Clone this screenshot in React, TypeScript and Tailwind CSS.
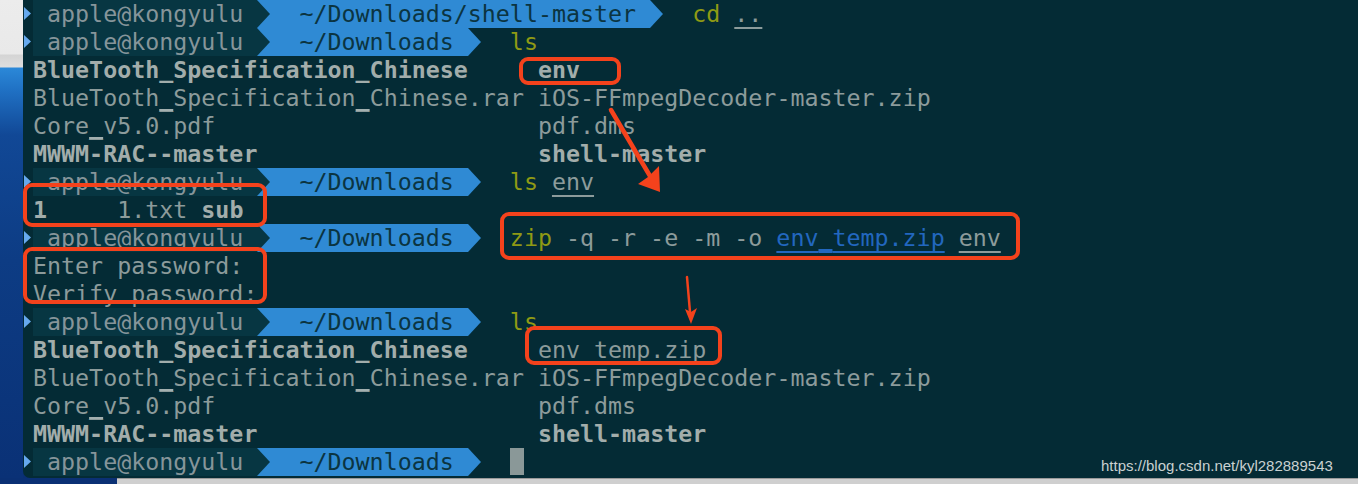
import type { ReactNode } from 'react';

type Seg = { t: string; b?: boolean; u?: boolean; cmd?: boolean; link?: boolean };

const mono = "font-['DejaVu_Sans_Mono','Liberation_Mono',monospace]";

function withUnderscores(t: string, bold?: boolean, link?: boolean): ReactNode {
  if (bold || !t.includes('_')) return t;
  const deco = link ? '' : ' decoration-[#a3b0b0]';
  return t.split(/(_)/).map((p, i) =>
    p === '_' ? (
      <span key={i} className={'underline decoration-2 underline-offset-[3px]' + deco}>
        _
      </span>
    ) : (
      p
    ),
  );
}

function Span({ s }: { s: Seg }) {
  let cls = 'text-[#8c9b9b]';
  if (s.b) cls = 'font-bold text-[#a2adab]';
  if (s.cmd) cls = 'text-[#8f9a14]';
  if (s.link) cls = 'text-[#2267bf]';
  const u = s.u ? ' underline underline-offset-[5px] decoration-[1.5px]' : '';
  return <span className={cls + u}>{withUnderscores(s.t, s.b, s.link)}</span>;
}

function TextLine({ segs }: { segs: Seg[] }) {
  return (
    <div className="h-[28px] whitespace-pre pl-[10px] leading-[28px]">
      {segs.map((s, i) => (
        <Span key={i} s={s} />
      ))}
    </div>
  );
}

function Prompt({ dir, segs, cursor }: { dir: string; segs: Seg[]; cursor?: boolean }) {
  return (
    <div className="flex h-[28px] items-center whitespace-pre leading-[28px]">
      {/* gutter marker */}
      <svg width="10" height="28" className="shrink-0">
        <polygon points="1,7 8,13.5 1,20" fill="#66a9ee" />
      </svg>
      <div className="flex h-full items-center bg-[#073642] text-[#86959a]">{' apple@kongyulu '}</div>
      <svg width="14" height="28" className="shrink-0">
        <rect width="14" height="28" fill="#2f8ad4" />
        <polygon points="0,0 13,14 0,28" fill="#073642" />
      </svg>
      <div className="flex h-full items-center bg-[#2f8ad4] text-[#0b3441]">{'  ' + dir + ' '}</div>
      <svg width="14" height="28" className="shrink-0">
        <polygon points="0,0 13,14 0,28" fill="#2f8ad4" />
      </svg>
      <div className="h-full">
        {'  '}
        {segs.map((s, i) => (
          <Span key={i} s={s} />
        ))}
      </div>
      {cursor && <span className="mb-[1px] inline-block h-[27px] w-[14px] bg-[#8a9898]" />}
    </div>
  );
}

function Box({ x, y, w, h }: { x: number; y: number; w: number; h: number }) {
  return (
    <div
      className="pointer-events-none absolute rounded-[9px] border-[4px] border-[#f4421c]"
      style={{ left: x, top: y, width: w, height: h }}
    />
  );
}

export default function App() {
  const pad = (s: string) => s.padEnd(36, ' ');
  const listing = (second: Seg): ReactNode => (
    <>
      <TextLine segs={[{ t: 'BlueTooth_Specification_Chinese', b: true }, { t: '     ' }, second]} />
      <TextLine segs={[{ t: 'BlueTooth_Specification_Chinese.rar iOS-FFmpegDecoder-master.zip' }]} />
      <TextLine segs={[{ t: pad('Core_v5.0.pdf') }, { t: 'pdf.dms' }]} />
      <TextLine segs={[{ t: 'MWWM-RAC--master', b: true }, { t: pad('').slice(16) }, { t: 'shell-master', b: true }]} />
    </>
  );

  return (
    <div className="relative flex h-[484px] w-[1358px] flex-col overflow-hidden bg-[#0a2f72]">
      <div className="flex h-[478px]">
        {/* desktop strip on the left */}
        <div className="w-[23px] shrink-0 bg-[linear-gradient(to_bottom,#ececec_0px,#e9e9e9_54px,#d4d4d4_55px,#dedede_67px,#2b88d8_68px,#1f6fc2_92px,#114896_135px,#0d3c84_260px,#0a3176_478px)]" />
        <div className={`flex-1 rounded-bl-[7px] bg-[#042b35] text-[23.3px] ${mono}`}>
          <Prompt dir="~/Downloads/shell-master" segs={[{ t: 'cd', cmd: true }, { t: ' ' }, { t: '..', u: true }]} />
          <Prompt dir="~/Downloads" segs={[{ t: 'ls', cmd: true }]} />
          {listing({ t: 'env', b: true })}
          <Prompt dir="~/Downloads" segs={[{ t: 'ls', cmd: true }, { t: ' ' }, { t: 'env', u: true }]} />
          <TextLine segs={[{ t: '1', b: true }, { t: '     1.txt ' }, { t: 'sub', b: true }]} />
          <Prompt
            dir="~/Downloads"
            segs={[
              { t: 'zip', cmd: true },
              { t: ' -q -r -e -m -o ' },
              { t: 'env_temp.zip', link: true, u: true },
              { t: ' ' },
              { t: 'env', u: true },
            ]}
          />
          <TextLine segs={[{ t: 'Enter password:' }]} />
          <TextLine segs={[{ t: 'Verify password:' }]} />
          <Prompt dir="~/Downloads" segs={[{ t: 'ls', cmd: true }]} />
          {listing({ t: 'env_temp.zip' })}
          <Prompt dir="~/Downloads" segs={[]} cursor />
        </div>
      </div>
      <div className="flex h-[6px]">
        <div className="w-[117px] bg-[#0a3074]" />
        <div className="flex-1 border-t border-[#9a9a9a] bg-[#cfcfcf]" />
      </div>

      {/* annotations */}
      <Box x={519} y={57} w={102} h={28} />
      <Box x={23} y={183} w={244} h={44} />
      <Box x={23} y={247} w={244} h={57} />
      <Box x={500} y={212} w={520} h={48} />
      <Box x={525} y={326} w={197} h={39} />
      <svg className="pointer-events-none absolute left-0 top-0" width="1358" height="484">
        <line x1="611" y1="110" x2="650" y2="176" stroke="#f4421c" strokeWidth="4.5" strokeLinecap="round" />
        <polygon points="660,192 638,184 648,177 659,166" fill="#f4421c" />
        <line x1="687" y1="277" x2="690" y2="312" stroke="#f4421c" strokeWidth="2.5" strokeLinecap="round" />
        <polygon points="691,324 685,309 691,312 697,308" fill="#f4421c" />
      </svg>
      <div className="absolute left-[1101px] top-[455px] font-['Liberation_Sans',Arial,sans-serif] text-[15px] text-[#c9d1d1]">
        https://blog.csdn.net/kyl282889543
      </div>
    </div>
  );
}
